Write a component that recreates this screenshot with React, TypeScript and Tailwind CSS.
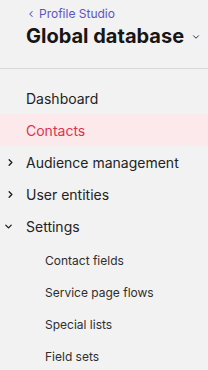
import { ChevronLeft, ChevronDown, ChevronRight } from "lucide-react";

const font = { fontFamily: "Inter, 'Noto Sans', sans-serif" };

function NavRow({ label, active, caret }: { label: string; active?: boolean; caret?: "right" | "down" }) {
  return (
    <div className={`relative flex h-8 items-center pl-[26px] text-[14px] ${active ? "bg-[#fce9eb] text-[#e0324f]" : "text-[#222]"}`}>
      {caret === "right" && <ChevronRight className="absolute left-[5px] h-[11px] w-[11px] text-[#1a1a1a]" strokeWidth={2.75} />}
      {caret === "down" && <ChevronDown className="absolute left-[3px] h-[11px] w-[11px] text-[#1a1a1a]" strokeWidth={2.75} />}
      {label}
    </div>
  );
}

function SubRow({ label }: { label: string }) {
  return <div className="flex h-8 items-center pl-[45px] text-[12px] text-[#2e2e2e]">{label}</div>;
}

export default function App() {
  return (
    <div className="h-[370px] w-[208px] overflow-hidden bg-[#f2f2f2]" style={font}>
      <div className="h-[69px] border-b border-[#d8d8d8] pl-[26px] pt-[5px]">
        <div className="flex items-center gap-[3px] text-[12px] text-[#5a55c4]">
          <ChevronLeft className="h-[10px] w-[10px]" strokeWidth={2.5} />
          <span>Profile Studio</span>
        </div>
        <div className="-mt-[2px] flex items-center gap-[7px] text-[20px] font-bold text-[#161616]">
          <span>Global database</span>
          <ChevronDown className="mt-[2px] h-[10px] w-[10px] text-[#22224a]" strokeWidth={2.25} />
        </div>
      </div>
      <div className="pt-[13px]">
        <NavRow label="Dashboard" />
        <NavRow label="Contacts" active />
        <NavRow label="Audience management" caret="right" />
        <NavRow label="User entities" caret="right" />
        <NavRow label="Settings" caret="down" />
        <div className="pt-[3px]">
          <SubRow label="Contact fields" />
          <SubRow label="Service page flows" />
          <SubRow label="Special lists" />
          <SubRow label="Field sets" />
        </div>
      </div>
    </div>
  );
}
